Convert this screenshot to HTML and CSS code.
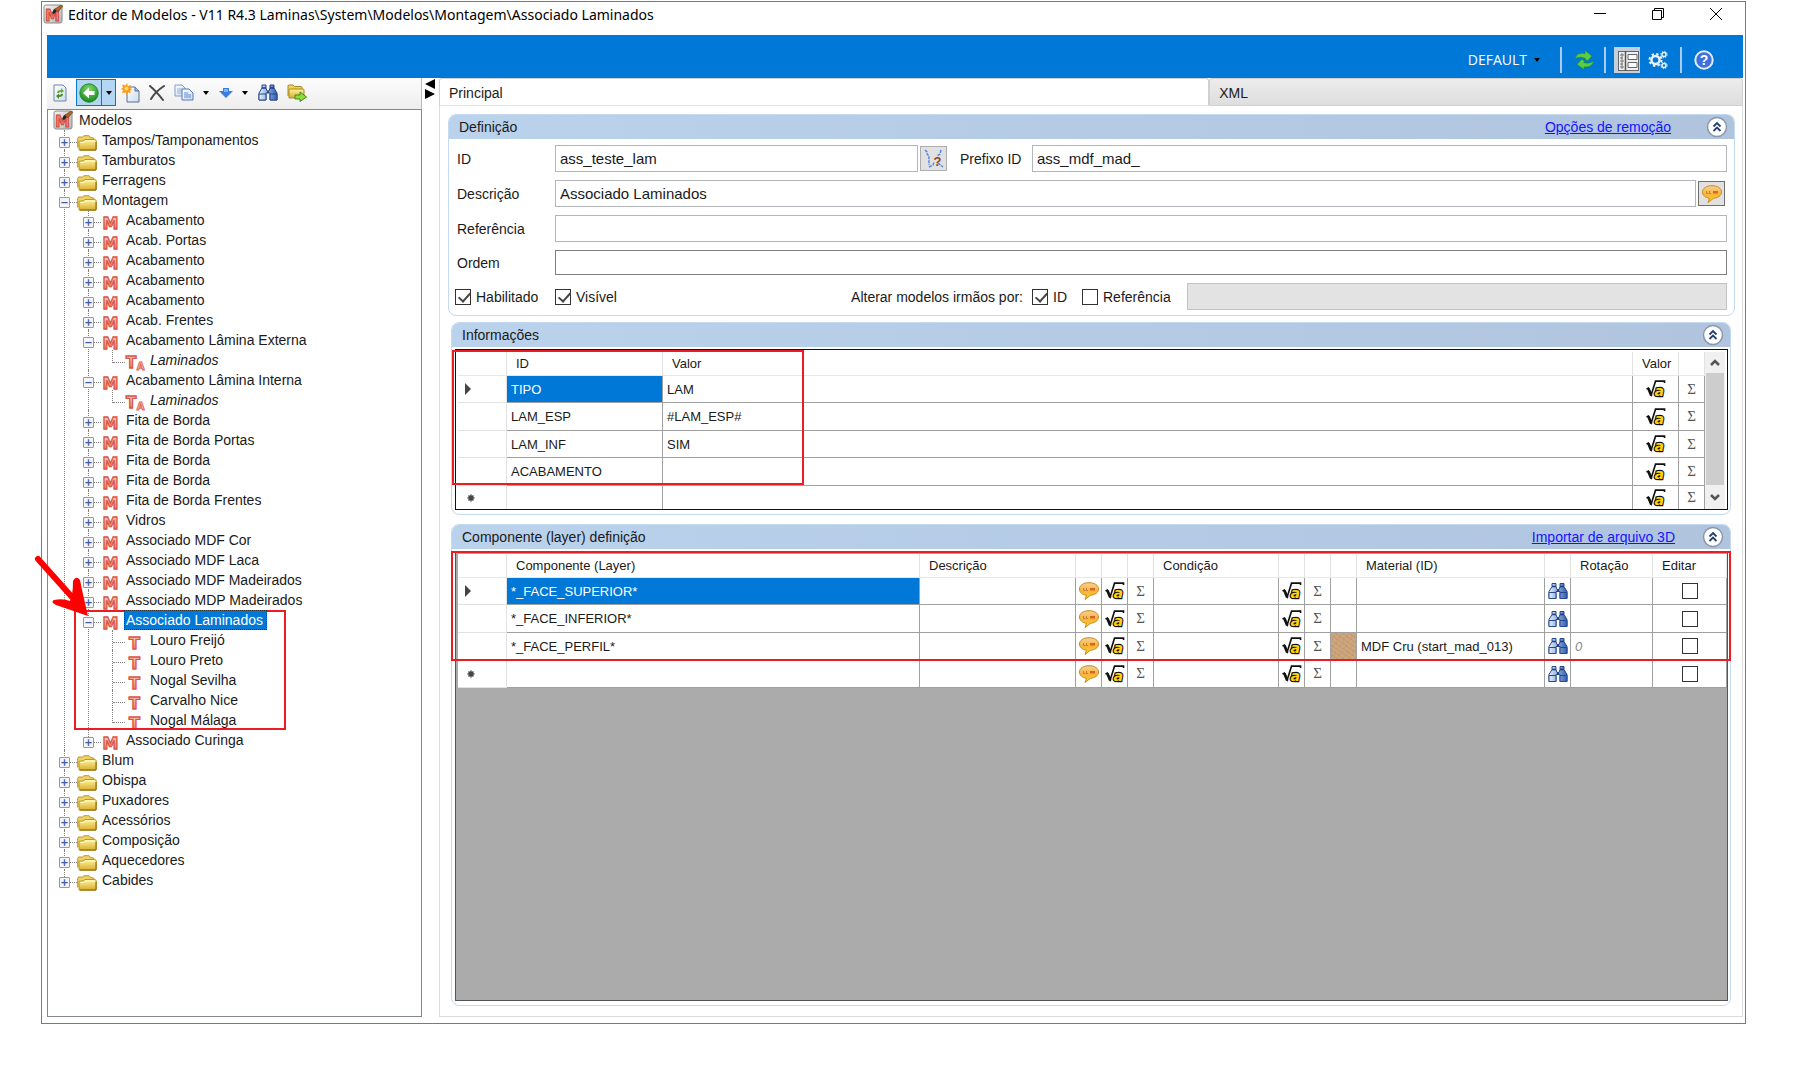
FILE: index.html
```html
<!DOCTYPE html>
<html lang="pt-BR">
<head>
    <meta charset="UTF-8">
    <title>Editor de Modelos</title>
    <link rel="stylesheet" href="styles.css">
</head>
<body>
    <!-- icon sprite: gradients and plain shapes -->
    <svg class="sprite" aria-hidden="true">
        <defs>
            <linearGradient id="gRed" x1="0" y1="0" x2="0" y2="1"><stop offset="0" stop-color="#fbe3c8"/><stop offset="1" stop-color="#f4604a"/></linearGradient>
            <linearGradient id="gGold" x1="0" y1="0" x2="0" y2="1"><stop offset="0" stop-color="#fff3a0"/><stop offset="1" stop-color="#d9ac2c"/></linearGradient>
            <linearGradient id="gBlue" x1="0" y1="0" x2="1" y2="0"><stop offset="0" stop-color="#e6f1fc"/><stop offset="1" stop-color="#2f5fb0"/></linearGradient>
            <linearGradient id="gPage" x1="0" y1="0" x2="1" y2="1"><stop offset="0" stop-color="#ffffff"/><stop offset="1" stop-color="#c9dcf2"/></linearGradient>
            <radialGradient id="gGreen" cx=".5" cy=".3" r=".7"><stop offset="0" stop-color="#7fdc6c"/><stop offset="1" stop-color="#16881c"/></radialGradient>
            <linearGradient id="gBalloon" x1="0" y1="0" x2="0" y2="1"><stop offset="0" stop-color="#f7cf98"/><stop offset=".5" stop-color="#f7b53c"/><stop offset="1" stop-color="#ffd21c"/></linearGradient>
            <linearGradient id="gGray" x1="0" y1="0" x2="1" y2="1"><stop offset="0" stop-color="#f6f6f6"/><stop offset="1" stop-color="#b5b5b5"/></linearGradient>
        </defs>
        <symbol id="i-folder" viewBox="0 0 20 16">
            <path d="M.7 12.500V3.500Q.7 2 2 2h3.500L7 .7h5l1.300 1.600 3.700 1v4" fill="#f0d060" stroke="#b8992c"/>
            <path d="M2 15V7q0-1 1-1h3l2-1.500h9.500q1.800 0 1.800 1.500v8q0 1.200-1.200 1.200H3Q2 15.200 2 15z" fill="url(#gGold)" stroke="#b8992c"/>
            <path d="M3.500 7.500h3.500l1.500-1.500h9" fill="none" stroke="#fffbd5"/>
            <path d="M19 7v8H3" fill="none" stroke="#8a6c10"/>
        </symbol>
        <symbol id="i-page-refresh" viewBox="0 0 14 18">
            <path d="M1 1h9l3 3v13H1z" fill="url(#gPage)" stroke="#6f87a5"/>
            <path d="M4 9q0-3 4-3V4l3 3-3 2.500V8Q6 8 6 9z" fill="#6fae3c"/>
            <path d="M10 10q0 3-4 3v2l-3-3 3-2.500V11q2 0 2-1z" fill="#4c8c28"/>
        </symbol>
        <symbol id="i-back" viewBox="0 0 20 20">
            <circle cx="10" cy="10" r="9.200" fill="url(#gGreen)" stroke="#2a8a2a"/>
            <path d="M4 10l6-5.500v3.500h5.500v4H10v3.500z" fill="#fff"/>
        </symbol>
        <symbol id="i-new" viewBox="0 0 19 20">
            <path d="M6 4h8l4 4v11H6z" fill="url(#gPage)" stroke="#5a6f8e"/><path d="M14 4v4h4" fill="#9db7d8" stroke="#5a6f8e"/>
            <path d="M6 0l1 3 3-1-1 3 2 1-2 2 1 2-3-.500-1 2.500-1.500-2.500L1 10l1-3L0 6l2-1.500L1 1.500l3.500 1z" fill="#ff9c1e"/><circle cx="5.500" cy="5.500" r="2" fill="#ffe066"/>
        </symbol>
        <symbol id="i-x" viewBox="0 0 16 16">
            <path d="M1 1q6 5 13 14M15 1Q6 7 2 14" fill="none" stroke="#484848" stroke-width="2" stroke-linecap="round"/>
        </symbol>
        <symbol id="i-copy" viewBox="0 0 20 17">
            <path d="M1 1h7l3 3v8H1z" fill="url(#gPage)" stroke="#7f9cc8"/><path d="M3 5h5M3 7h5M3 9h5" stroke="#8fb0de"/>
            <path d="M8 5h7l4 4v7H8z" fill="url(#gPage)" stroke="#5878b8"/><path d="M10 9h4M10 11h7M10 13h7" stroke="#5a8ad8"/>
        </symbol>
        <symbol id="i-down" viewBox="0 0 14 10">
            <path d="M4 0h6v3h4L7 10 0 3h4z" fill="#3a7fe0"/><path d="M5 1h4v3H5z" fill="#7fb2f5"/>
        </symbol>
        <symbol id="i-bin" viewBox="0 0 20 17">
            <path d="M4 4V1h4v3l1 3h2l1-3V1h4v3l3 5v7h-7V9H8v7H1V9z" fill="url(#gBlue)" stroke="#26488f"/>
            <path d="M1 10h7v6H1zM12 10h7v6h-7z" fill="url(#gBlue)" stroke="#26488f"/>
            <path d="M4 4h4M12 4h4M9 8h2" stroke="#1f3c80" stroke-width="1.500"/>
        </symbol>
        <symbol id="i-folder-go" viewBox="0 0 20 18">
            <path d="M1 12V2q0-1 1-1h4l1.500 1.500H14Q15 2.500 15 4v2" fill="#f0d060" stroke="#a98a1c"/>
            <path d="M2 14V6q0-1 1-1h13q1 0 1 1v8z" fill="url(#gGold)" stroke="#a98a1c"/>
            <path d="M8 11h5V8l6.500 5L13 17.500V15H8z" fill="#8edb3c" stroke="#3d8a1c"/>
        </symbol>
        <symbol id="i-sync" viewBox="0 0 20 20">
            <path d="M1 8.500Q3 2 11 3.500V.5L18 6l-4.500 5L10 8.500h1.500Q6 6 1 8.500z" fill="#5ccc44" stroke="#1d8a2a" stroke-width=".6"/>
            <path d="M20 11q-2 6.500-10 6v2.500L3 14.500 8 9l3 3-1.500.500q5 2 10.500-1.500z" fill="#5ccc44" stroke="#1d8a2a" stroke-width=".6"/>
        </symbol>
        <symbol id="i-form" viewBox="0 0 26 26">
            <rect width="26" height="26" fill="#c4cfdb"/>
            <rect x="4.500" y="4.500" width="20" height="19" fill="#eee" stroke="#666"/>
            <path d="M11.500 4v20" stroke="#555" stroke-width="1.500"/>
            <path d="M6 8h4M6 11h3M6 14h4M6 17h3M6 20h4M8 6v16" stroke="#777"/>
            <path d="M14 7.500h9v5h-9zM14 15.500h9v5h-9z" fill="#fafafa" stroke="#666"/>
        </symbol>
        <symbol id="i-gears" viewBox="0 0 20 20">
            <circle cx="7.500" cy="10" r="4" fill="none" stroke="#e9f2fb" stroke-width="2.400"/>
            <circle cx="7.500" cy="10" r="6" fill="none" stroke="#e9f2fb" stroke-width="2" stroke-dasharray="2.400 2.310"/>
            <circle cx="16" cy="4.500" r="2" fill="none" stroke="#e9f2fb" stroke-width="1.500"/>
            <circle cx="16" cy="4.500" r="3.200" fill="none" stroke="#e9f2fb" stroke-width="1" stroke-dasharray="1.200 1.300"/>
            <circle cx="16" cy="15.500" r="2" fill="none" stroke="#e9f2fb" stroke-width="1.500"/>
            <circle cx="16" cy="15.500" r="3.200" fill="none" stroke="#e9f2fb" stroke-width="1" stroke-dasharray="1.200 1.300"/>
        </symbol>
        <symbol id="i-balloon" viewBox="0 0 20 18">
            <path d="M10 .7c5.500 0 9.500 2.500 9.500 6.300S15.500 13 11.500 13.300L6 17.500l1.500-4.200C3.500 12.700.5 10.500.5 7 .5 3.200 4.500.7 10 .7z" fill="url(#gBalloon)" stroke="#c98a1c"/>
            <path d="M4.500 6v2.500h2M7.500 6v2.500h1.500" fill="none" stroke="#c77a3a"/><path d="M11 6h5v2.500h-5z" fill="#d9661c"/>
        </symbol>
        <symbol id="i-up2" viewBox="0 0 22 22">
            <circle cx="11" cy="11" r="9.500" fill="#fff" stroke="#8b97aa" stroke-width="1.500"/>
            <path d="M7.500 10.500L11 7l3.500 3.500M7.500 15l3.500-3.500 3.500 3.500" fill="none" stroke="#24406e" stroke-width="1.800"/>
        </symbol>
        <symbol id="i-row" viewBox="0 0 6 12"><path d="M0 0l6 6-6 6z" fill="#444"/></symbol>
        <symbol id="i-star" viewBox="0 0 8 8"><path d="M4 .5v7M.5 4h7M1.500 1.500l5 5M6.500 1.500l-5 5" stroke="#444" stroke-width="1.500"/></symbol>
    </svg>

    <!-- icon sprite: lettered icons -->
    <svg class="letters" aria-hidden="true">
        <symbol id="i-app" viewBox="0 0 20 20">
            <rect x="1" y="1" width="18" height="18" rx="2" fill="url(#gGray)" stroke="#8a8a8a"/>
            <text x="9.500" y="17" text-anchor="middle" font-family="DejaVu Sans" font-weight="bold" font-size="15" fill="#ef7f72" stroke="#d0493c" stroke-width="1">M</text>
            <path d="M9 9l2-4 3 2-3 3z" fill="#222"/><path d="M12 5l6-4 2 1-5 6z" fill="#a8642c" stroke="#6e3d14" stroke-width=".6"/>
        </symbol>
        <symbol id="i-m" viewBox="0 0 20 16">
            <text x="9.500" y="13.500" text-anchor="middle" font-family="DejaVu Sans" font-weight="bold" font-size="16" fill="url(#gRed)" stroke="#d8564a" stroke-width="1.300">M</text>
        </symbol>
        <symbol id="i-t" viewBox="0 0 20 16">
            <text x="9.500" y="14" text-anchor="middle" font-family="DejaVu Sans" font-weight="bold" font-size="16" fill="url(#gRed)" stroke="#d8564a" stroke-width="1.300">T</text>
        </symbol>
        <symbol id="i-ta" viewBox="0 0 20 16">
            <text x="6" y="13" text-anchor="middle" font-family="DejaVu Sans" font-weight="bold" font-size="15" fill="url(#gRed)" stroke="#d8564a" stroke-width="1.300">T</text>
            <text x="15.500" y="15" text-anchor="middle" font-family="DejaVu Sans" font-weight="bold" font-size="10" fill="#fbd9cc" stroke="#e0685c" stroke-width="1">A</text>
        </symbol>
        <symbol id="i-help" viewBox="0 0 20 20">
            <circle cx="10" cy="10" r="8.700" fill="#3f6fd8" stroke="#e4ecf8" stroke-width="2"/>
            <text x="10" y="15" text-anchor="middle" font-family="Liberation Sans" font-weight="bold" font-size="14" fill="#fff">?</text>
        </symbol>
        <symbol id="i-sqrt" viewBox="0 0 20 19">
            <path d="M0 9.500l2-1 3 7L9.500 1.200H19v2" fill="none" stroke="#111" stroke-width="1.700"/>
            <path d="M2 9l3 7.500" stroke="#111" stroke-width="2.800"/>
            <text x="8.500" y="17" font-family="DejaVu Sans" font-weight="bold" font-style="italic" font-size="15" fill="#ffcf10" stroke="#111" stroke-width="2.400" paint-order="stroke">a</text>
        </symbol>
        <symbol id="i-vars" viewBox="0 0 20 20">
            <path d="M1 1l2 2v2l2 2v9M17 1l-1 4-3 2M5 18l4-2 1-3M14 14l5 4" fill="none" stroke="#4f7fe0" stroke-width="1.400" stroke-dasharray="3 1"/>
            <text x="13.500" y="17" text-anchor="middle" font-family="Liberation Sans" font-weight="bold" font-size="13" fill="#8a4a1c">?</text>
        </symbol>
    </svg>

    <div class="window">
        <header class="titlebar">
            <svg class="app-icon"><use href="#i-app"/></svg>
            <h1 class="title">Editor de Modelos - V11 R4.3 Laminas\System\Modelos\Montagem\Associado Laminados</h1>
            <button class="win-btn" aria-label="Minimizar"><svg viewBox="0 0 14 14"><path d="M1 6.500h12" stroke="#000" fill="none"/></svg></button>
            <button class="win-btn" aria-label="Restaurar"><svg viewBox="0 0 14 14"><path d="M1.500 3.500h9v9h-9zM3.500 3.500v-2h9v9h-2" stroke="#000" fill="none"/></svg></button>
            <button class="win-btn" aria-label="Fechar"><svg viewBox="0 0 14 14"><path d="M1 1l12 12M13 1L1 13" stroke="#000" fill="none"/></svg></button>
        </header>

        <div class="topbar">
            <button class="profile">DEFAULT <span class="caret"></span></button>
            <span class="sep"></span>
            <button class="top-btn" aria-label="Sincronizar"><svg class="s20"><use href="#i-sync"/></svg></button>
            <span class="sep"></span>
            <button class="top-btn wide" aria-label="Formulário"><svg class="s26"><use href="#i-form"/></svg></button>
            <button class="top-btn" aria-label="Configurações"><svg class="s20"><use href="#i-gears"/></svg></button>
            <span class="sep"></span>
            <button class="top-btn last" aria-label="Ajuda"><svg class="s20"><use href="#i-help"/></svg></button>
        </div>

        <div class="main">
            <aside class="left">
                <div class="toolbar">
                    <button class="tool" aria-label="Atualizar"><svg width="14" height="18"><use href="#i-page-refresh"/></svg></button>
                    <span class="split">
                        <button class="tool" aria-label="Voltar"><svg class="s20"><use href="#i-back"/></svg></button>
                        <button class="drop" aria-label="Histórico"><span class="caret"></span></button>
                    </span>
                    <button class="tool" aria-label="Novo"><svg width="19" height="20"><use href="#i-new"/></svg></button>
                    <button class="tool" aria-label="Excluir"><svg width="16" height="16"><use href="#i-x"/></svg></button>
                    <button class="tool" aria-label="Copiar"><svg width="20" height="17"><use href="#i-copy"/></svg></button>
                    <button class="drop" aria-label="Opções de cópia"><span class="caret"></span></button>
                    <button class="tool" aria-label="Descer"><svg width="14" height="10"><use href="#i-down"/></svg></button>
                    <button class="drop" aria-label="Opções de ordem"><span class="caret"></span></button>
                    <button class="tool" aria-label="Localizar"><svg width="20" height="17"><use href="#i-bin"/></svg></button>
                    <button class="tool" aria-label="Ir para pasta"><svg width="20" height="18"><use href="#i-folder-go"/></svg></button>
                </div>

                <div class="tree">
                    <div class="root"><svg class="s20"><use href="#i-app"/></svg><span>Modelos</span></div>
                    <ul>
                        <li><div class="node"><button class="exp">+</button><svg><use href="#i-folder"/></svg><span>Tampos/Tamponamentos</span></div></li>
                        <li><div class="node"><button class="exp">+</button><svg><use href="#i-folder"/></svg><span>Tamburatos</span></div></li>
                        <li><div class="node"><button class="exp">+</button><svg><use href="#i-folder"/></svg><span>Ferragens</span></div></li>
                        <li><div class="node"><button class="exp">−</button><svg><use href="#i-folder"/></svg><span>Montagem</span></div>
                            <ul>
                                <li><div class="node"><button class="exp">+</button><svg><use href="#i-m"/></svg><span>Acabamento</span></div></li>
                                <li><div class="node"><button class="exp">+</button><svg><use href="#i-m"/></svg><span>Acab. Portas</span></div></li>
                                <li><div class="node"><button class="exp">+</button><svg><use href="#i-m"/></svg><span>Acabamento</span></div></li>
                                <li><div class="node"><button class="exp">+</button><svg><use href="#i-m"/></svg><span>Acabamento</span></div></li>
                                <li><div class="node"><button class="exp">+</button><svg><use href="#i-m"/></svg><span>Acabamento</span></div></li>
                                <li><div class="node"><button class="exp">+</button><svg><use href="#i-m"/></svg><span>Acab. Frentes</span></div></li>
                                <li><div class="node"><button class="exp">−</button><svg><use href="#i-m"/></svg><span>Acabamento Lâmina Externa</span></div>
                                    <ul>
                                        <li><div class="node leaf"><svg><use href="#i-ta"/></svg><em>Laminados</em></div></li>
                                    </ul>
                                </li>
                                <li><div class="node"><button class="exp">−</button><svg><use href="#i-m"/></svg><span>Acabamento Lâmina Interna</span></div>
                                    <ul>
                                        <li><div class="node leaf"><svg><use href="#i-ta"/></svg><em>Laminados</em></div></li>
                                    </ul>
                                </li>
                                <li><div class="node"><button class="exp">+</button><svg><use href="#i-m"/></svg><span>Fita de Borda</span></div></li>
                                <li><div class="node"><button class="exp">+</button><svg><use href="#i-m"/></svg><span>Fita de Borda Portas</span></div></li>
                                <li><div class="node"><button class="exp">+</button><svg><use href="#i-m"/></svg><span>Fita de Borda</span></div></li>
                                <li><div class="node"><button class="exp">+</button><svg><use href="#i-m"/></svg><span>Fita de Borda</span></div></li>
                                <li><div class="node"><button class="exp">+</button><svg><use href="#i-m"/></svg><span>Fita de Borda Frentes</span></div></li>
                                <li><div class="node"><button class="exp">+</button><svg><use href="#i-m"/></svg><span>Vidros</span></div></li>
                                <li><div class="node"><button class="exp">+</button><svg><use href="#i-m"/></svg><span>Associado MDF Cor</span></div></li>
                                <li><div class="node"><button class="exp">+</button><svg><use href="#i-m"/></svg><span>Associado MDF Laca</span></div></li>
                                <li><div class="node"><button class="exp">+</button><svg><use href="#i-m"/></svg><span>Associado MDF Madeirados</span></div></li>
                                <li><div class="node"><button class="exp">+</button><svg><use href="#i-m"/></svg><span>Associado MDP Madeirados</span></div></li>
                                <li><div class="node"><button class="exp">−</button><svg><use href="#i-m"/></svg><span class="selected">Associado Laminados</span></div>
                                    <ul>
                                        <li><div class="node leaf"><svg><use href="#i-t"/></svg><span>Louro Freijó</span></div></li>
                                        <li><div class="node leaf"><svg><use href="#i-t"/></svg><span>Louro Preto</span></div></li>
                                        <li><div class="node leaf"><svg><use href="#i-t"/></svg><span>Nogal Sevilha</span></div></li>
                                        <li><div class="node leaf"><svg><use href="#i-t"/></svg><span>Carvalho Nice</span></div></li>
                                        <li><div class="node leaf"><svg><use href="#i-t"/></svg><span>Nogal Málaga</span></div></li>
                                    </ul>
                                    <div class="mark mark-tree"></div>
                                    <svg class="arrow" viewBox="0 0 54 62"><path d="M4 4L38 42" stroke="#f00" stroke-width="6" stroke-linecap="round"/><path d="M54 61L22 50Q16 47 20 45Q29 43 36 46Q39 40 39 26Q42 20 46 25Q49 40 54 61z" fill="#f00"/></svg>
                                </li>
                                <li><div class="node"><button class="exp">+</button><svg><use href="#i-m"/></svg><span>Associado Curinga</span></div></li>
                            </ul>
                        </li>
                        <li><div class="node"><button class="exp">+</button><svg><use href="#i-folder"/></svg><span>Blum</span></div></li>
                        <li><div class="node"><button class="exp">+</button><svg><use href="#i-folder"/></svg><span>Obispa</span></div></li>
                        <li><div class="node"><button class="exp">+</button><svg><use href="#i-folder"/></svg><span>Puxadores</span></div></li>
                        <li><div class="node"><button class="exp">+</button><svg><use href="#i-folder"/></svg><span>Acessórios</span></div></li>
                        <li><div class="node"><button class="exp">+</button><svg><use href="#i-folder"/></svg><span>Composição</span></div></li>
                        <li><div class="node"><button class="exp">+</button><svg><use href="#i-folder"/></svg><span>Aquecedores</span></div></li>
                        <li><div class="node"><button class="exp">+</button><svg><use href="#i-folder"/></svg><span>Cabides</span></div></li>
                    </ul>
                </div>
            </aside>

            <div class="splitter">
                <svg width="10" height="20" viewBox="0 0 10 20"><path d="M10 0v10L0 5zM0 10v10l10-5z"/></svg>
            </div>

            <main class="right">
                <div class="tabs">
                    <button class="tab active">Principal</button>
                    <button class="tab">XML</button>
                </div>
                <div class="page">
                    <section class="group wide-group">
                        <div class="group-head">
                            <h2>Definição</h2>
                            <a href="#">Opções de remoção</a>
                            <button class="collapse" aria-label="Recolher"><svg><use href="#i-up2"/></svg></button>
                        </div>
                        <div class="form">
                            <div class="row cols">
                                <label for="id">ID</label>
                                <div class="cell">
                                    <input type="text" id="id" value="ass_teste_lam">
                                    <button class="side-btn" aria-label="Variáveis"><svg class="s20"><use href="#i-vars"/></svg></button>
                                    <label class="prefix" for="prefixo">Prefixo ID</label>
                                </div>
                                <input type="text" id="prefixo" value="ass_mdf_mad_">
                            </div>
                            <div class="row">
                                <label for="descricao">Descrição</label>
                                <input type="text" id="descricao" value="Associado Laminados">
                                <button class="side-btn dark" aria-label="Traduzir"><svg width="20" height="18"><use href="#i-balloon"/></svg></button>
                            </div>
                            <div class="row">
                                <label for="referencia">Referência</label>
                                <input type="text" id="referencia">
                            </div>
                            <div class="row">
                                <label for="ordem">Ordem</label>
                                <input type="text" id="ordem" class="short">
                            </div>
                            <div class="row cols">
                                <label class="check"><input type="checkbox" checked>Habilitado</label>
                                <div class="cell">
                                    <label class="check"><input type="checkbox" checked>Visível</label>
                                    <span class="hint">Alterar modelos irmãos por:</span>
                                </div>
                                <div class="cell">
                                    <label class="check"><input type="checkbox" checked>ID</label>
                                    <label class="check ref"><input type="checkbox">Referência</label>
                                    <input type="text" aria-label="Referência" disabled>
                                </div>
                            </div>
                        </div>
                    </section>

                    <section class="group">
                        <div class="group-head">
                            <h2>Informações</h2>
                            <button class="collapse" aria-label="Recolher"><svg><use href="#i-up2"/></svg></button>
                        </div>
                        <div class="grid info-grid">
                            <table>
                                <colgroup><col class="w-head"><col class="w-id"><col><col class="w-val"><col class="w-ico"></colgroup>
                                <thead>
                                    <tr><th></th><th>ID</th><th>Valor</th><th class="mid">Valor</th><th></th></tr>
                                </thead>
                                <tbody>
                                    <tr><td class="rh"><svg class="cur"><use href="#i-row"/></svg></td><td class="sel">TIPO</td><td>LAM</td><td class="ico"><button aria-label="Fórmula"><svg><use href="#i-sqrt"/></svg></button></td><td class="ico sum">Σ</td></tr>
                                    <tr><td class="rh"></td><td>LAM_ESP</td><td>#LAM_ESP#</td><td class="ico"><button aria-label="Fórmula"><svg><use href="#i-sqrt"/></svg></button></td><td class="ico sum">Σ</td></tr>
                                    <tr><td class="rh"></td><td>LAM_INF</td><td>SIM</td><td class="ico"><button aria-label="Fórmula"><svg><use href="#i-sqrt"/></svg></button></td><td class="ico sum">Σ</td></tr>
                                    <tr><td class="rh"></td><td>ACABAMENTO</td><td></td><td class="ico"><button aria-label="Fórmula"><svg><use href="#i-sqrt"/></svg></button></td><td class="ico sum">Σ</td></tr>
                                    <tr><td class="rh"><svg class="star"><use href="#i-star"/></svg></td><td></td><td></td><td class="ico"><button aria-label="Fórmula"><svg><use href="#i-sqrt"/></svg></button></td><td class="ico sum">Σ</td></tr>
                                </tbody>
                            </table>
                            <div class="scroll">
                                <button aria-label="Rolar para cima"><svg viewBox="0 0 10 8"><path d="M1 6l4-4 4 4" fill="none" stroke="#555" stroke-width="2.500"/></svg></button>
                                <div class="thumb"></div>
                                <button aria-label="Rolar para baixo"><svg viewBox="0 0 10 8"><path d="M1 2l4 4 4-4" fill="none" stroke="#555" stroke-width="2.500"/></svg></button>
                            </div>
                            <div class="mark mark-info"></div>
                        </div>
                    </section>

                    <section class="group last-group">
                        <div class="group-head">
                            <h2>Componente (layer) definição</h2>
                            <a href="#">Importar de arquivo 3D</a>
                            <button class="collapse" aria-label="Recolher"><svg><use href="#i-up2"/></svg></button>
                        </div>
                        <div class="grid comp-grid">
                            <table>
                                <colgroup><col class="w-head"><col><col class="w-desc"><col class="w-ico"><col class="w-ico"><col class="w-ico"><col class="w-cond"><col class="w-ico"><col class="w-ico"><col class="w-ico"><col class="w-mat"><col class="w-ico"><col class="w-rot"><col class="w-edit"></colgroup>
                                <thead>
                                    <tr><th></th><th>Componente (Layer)</th><th>Descrição</th><th></th><th></th><th></th><th>Condição</th><th></th><th></th><th></th><th>Material (ID)</th><th></th><th>Rotação</th><th>Editar</th></tr>
                                </thead>
                                <tbody>
                                    <tr><td class="rh"><svg class="cur"><use href="#i-row"/></svg></td><td class="sel">*_FACE_SUPERIOR*</td><td></td><td class="ico"><button aria-label="Traduzir"><svg><use href="#i-balloon"/></svg></button></td><td class="ico"><button aria-label="Fórmula"><svg><use href="#i-sqrt"/></svg></button></td><td class="ico sum">Σ</td><td></td><td class="ico"><button aria-label="Fórmula"><svg><use href="#i-sqrt"/></svg></button></td><td class="ico sum">Σ</td><td></td><td></td><td class="ico"><button aria-label="Localizar"><svg><use href="#i-bin"/></svg></button></td><td></td><td class="ico"><input type="checkbox" aria-label="Editar"></td></tr>
                                    <tr><td class="rh"></td><td>*_FACE_INFERIOR*</td><td></td><td class="ico"><button aria-label="Traduzir"><svg><use href="#i-balloon"/></svg></button></td><td class="ico"><button aria-label="Fórmula"><svg><use href="#i-sqrt"/></svg></button></td><td class="ico sum">Σ</td><td></td><td class="ico"><button aria-label="Fórmula"><svg><use href="#i-sqrt"/></svg></button></td><td class="ico sum">Σ</td><td></td><td></td><td class="ico"><button aria-label="Localizar"><svg><use href="#i-bin"/></svg></button></td><td></td><td class="ico"><input type="checkbox" aria-label="Editar"></td></tr>
                                    <tr><td class="rh"></td><td>*_FACE_PERFIL*</td><td></td><td class="ico"><button aria-label="Traduzir"><svg><use href="#i-balloon"/></svg></button></td><td class="ico"><button aria-label="Fórmula"><svg><use href="#i-sqrt"/></svg></button></td><td class="ico sum">Σ</td><td></td><td class="ico"><button aria-label="Fórmula"><svg><use href="#i-sqrt"/></svg></button></td><td class="ico sum">Σ</td><td class="mdf"></td><td>MDF Cru (start_mad_013)</td><td class="ico"><button aria-label="Localizar"><svg><use href="#i-bin"/></svg></button></td><td class="rot">0</td><td class="ico"><input type="checkbox" aria-label="Editar"></td></tr>
                                    <tr><td class="rh"><svg class="star"><use href="#i-star"/></svg></td><td></td><td></td><td class="ico"><button aria-label="Traduzir"><svg><use href="#i-balloon"/></svg></button></td><td class="ico"><button aria-label="Fórmula"><svg><use href="#i-sqrt"/></svg></button></td><td class="ico sum">Σ</td><td></td><td class="ico"><button aria-label="Fórmula"><svg><use href="#i-sqrt"/></svg></button></td><td class="ico sum">Σ</td><td></td><td></td><td class="ico"><button aria-label="Localizar"><svg><use href="#i-bin"/></svg></button></td><td></td><td class="ico"><input type="checkbox" aria-label="Editar"></td></tr>
                                </tbody>
                            </table>
                            <div class="mark mark-comp"></div>
                        </div>
                    </section>
                </div>
            </main>
        </div>
    </div>
</body>
</html>
```

FILE: styles.css
```css
* {
    box-sizing: border-box;
}
body {
    margin: 0;
    padding: 1px 50px 44px 41px;
    min-height: 100vh;
    display: flex;
    flex-direction: column;
    font-family: "Liberation Sans", Arial, sans-serif;
    font-size: 14px;
    color: #1a1a1a;
    background-color: #fff;
}
button {
    font: inherit;
    color: inherit;
    background: none;
    border: none;
    padding: 0;
}
svg {
    display: block;
    flex: none;
}
.sprite {
    position: absolute;
    width: 0;
    height: 0;
}
.letters {
    display: none;
}
.s20 {
    width: 20px;
    height: 20px;
}
.s26 {
    width: 26px;
    height: 26px;
}
.caret {
    display: block;
    border: 3px solid transparent;
    border-top: 4px solid #000;
    border-bottom: none;
}

/* window frame */
.window {
    flex: 1;
    display: flex;
    flex-direction: column;
    border: 1px solid #7a7a7a;
}
.titlebar {
    height: 33px;
    display: flex;
    align-items: flex-start;
    padding-left: 1px;
}
.app-icon {
    width: 20px;
    height: 20px;
    margin-top: 2px;
}
.title {
    flex: 1;
    margin: 0 0 0 5px;
    font-family: "Noto Sans", "Open Sans", sans-serif;
    font-size: 14px;
    font-weight: normal;
    line-height: 26px;
    color: #000;
}
.win-btn {
    width: 58px;
    height: 24px;
    display: flex;
    align-items: center;
    justify-content: center;
}
.win-btn svg {
    width: 14px;
    height: 14px;
}
.topbar {
    height: 43px;
    margin: 0 2px 0 5px;
    padding: 6px 23px 0 0;
    background-color: #0078d7;
    display: flex;
    align-items: center;
    justify-content: flex-end;
}
.profile {
    display: flex;
    align-items: center;
    gap: 7px;
    margin-right: 20px;
    font-family: "Open Sans", "Noto Sans", sans-serif;
    color: #fff;
}
.sep {
    width: 2px;
    height: 26px;
    background-color: #a9cdee;
}
.top-btn {
    margin: 0 10px 0 12px;
}
.top-btn.wide {
    margin: 0 8px 0 8px;
}
.top-btn.wide + .top-btn {
    margin: 0 12px 0 0;
}
.top-btn.last {
    margin: 0 6px 0 12px;
}
.main {
    flex: 1;
    display: flex;
    margin: 0 2px 6px 5px;
}

/* left pane */
.left {
    width: 375px;
    display: flex;
    flex-direction: column;
}
.toolbar {
    height: 31px;
    display: flex;
    align-items: center;
    padding: 0 0 2px 6px;
    background: linear-gradient(#fcfcfc, #eee);
    border-right: 1px solid #bbb;
}
.toolbar > .tool {
    margin-right: 9px;
}
.toolbar > .drop {
    margin-left: -3px;
    margin-right: 7px;
}
.drop {
    width: 12px;
    display: flex;
    justify-content: center;
}
.split {
    display: flex;
    align-items: stretch;
    height: 27px;
    margin-right: 5px;
    background-color: #b3d7f3;
    border: 1px solid #0078d7;
}
.split .tool {
    width: 25px;
    display: flex;
    align-items: center;
    justify-content: center;
    border-right: 1px solid #0078d7;
}
.split .drop {
    width: 13px;
    align-items: center;
}
.tree {
    flex: 1;
    border: 1px solid #828790;
    padding: 0 1px;
}
.root {
    height: 20px;
    display: flex;
    align-items: center;
    gap: 6px;
    padding: 0 0 0 4px;
}
.tree ul {
    list-style: none;
    margin: 0;
    padding: 0;
}
.tree ul ul {
    padding-left: 24px;
}
.tree li {
    position: relative;
}
.tree li::before {
    content: "";
    position: absolute;
    left: 15px;
    top: 0;
    bottom: 0;
    border-left: 1px dotted #808080;
}
.tree li:last-child::before {
    bottom: auto;
    height: 13px;
}
.node {
    height: 20px;
    line-height: 20px;
    display: flex;
    padding-left: 10px;
    white-space: nowrap;
}
.node::before {
    content: "";
    position: absolute;
    left: 16px;
    top: 12px;
    width: 12px;
    border-top: 1px dotted #808080;
}
.leaf {
    padding-left: 28px;
}
.exp {
    position: relative;
    width: 11px;
    height: 11px;
    margin: 7px 7px 0 0;
    font-family: "DejaVu Sans", sans-serif;
    font-size: 10px;
    font-weight: bold;
    line-height: 9px;
    color: #3c5aa8;
    background-color: #f4f4f4;
    border: 1px solid #999;
    border-radius: 1px;
}
.node svg {
    width: 20px;
    height: 16px;
    margin-top: 5px;
}
.node span,
.node em {
    margin-left: 3px;
    padding: 0 4px 0 2px;
    height: 20px;
}
.node .selected {
    color: #fff;
    background-color: #0078d7;
    outline: 1px dotted #333;
    outline-offset: -1px;
}

/* red annotations, drawn over the content */
.mark {
    position: absolute;
    border: 2px solid #ed1c24;
    pointer-events: none;
}
.mark-tree {
    left: 1px;
    top: 0;
    width: 212px;
    height: 120px;
}
.node .selected {
    position: relative;
    z-index: 1;
}
.arrow {
    position: absolute;
    left: -39px;
    top: -55px;
    width: 54px;
    height: 62px;
}
.mark-info {
    left: -4px;
    top: 0;
    width: 352px;
    height: 135px;
}
.mark-comp {
    left: -5px;
    right: -4px;
    top: -1px;
    height: 110px;
}

.splitter {
    width: 17px;
    padding: 1px 0 0 3px;
}

/* right pane */
.right {
    flex: 1;
    min-width: 0;
    display: flex;
    flex-direction: column;
}
.tabs {
    display: flex;
    height: 28px;
}
.tab {
    flex: 530;
    padding: 2px 9px 0;
    text-align: left;
    background: linear-gradient(#ececec, #dedede);
    border: 1px solid #d0d0d0;
    border-radius: 3px 3px 0 0;
}
.tab.active {
    flex: 774;
    background: #fff;
    border-bottom-color: #e4e4e4;
}
.page {
    flex: 1;
    display: flex;
    flex-direction: column;
    padding: 8px 7px 10px 8px;
    border: 1px solid #dcdcdc;
    border-top: none;
}
.group {
    margin: 0 4px 9px 3px;
    border: 1px solid #c3daf2;
    border-radius: 8px;
}
.wide-group {
    margin: 0 0 6px;
}
.last-group {
    flex: 1;
    display: flex;
    flex-direction: column;
    margin-bottom: 0;
}
.group-head {
    height: 24px;
    display: flex;
    align-items: center;
    padding: 0 6px 0 10px;
    background: linear-gradient(90deg, #bad2ec, #b0c4de);
    border-radius: 7px 7px 0 0;
}
.group-head h2 {
    margin: 0;
    flex: 1;
    font-size: 14px;
    font-weight: normal;
}
.group-head a {
    margin-right: 35px;
    color: #1414ff;
}
.last-group .group-head a {
    margin-right: 27px;
}
.collapse svg {
    width: 22px;
    height: 22px;
}
.form {
    padding: 6px 7px 5px 8px;
    display: flex;
    flex-direction: column;
    gap: 8px;
}
.row {
    display: flex;
    align-items: center;
}
.row > label {
    width: 98px;
    flex: none;
}
.row.cols {
    display: grid;
    grid-template-columns: 98px 477fr 695fr;
}
.cell {
    display: flex;
    align-items: center;
}
input[type="text"] {
    flex: 1;
    min-width: 0;
    height: 27px;
    padding: 0 4px;
    font-family: inherit;
    font-size: 15px;
    color: #1a1a1a;
    background-color: #fff;
    border: 1px solid #b4b4bb;
}
input[type="text"].short {
    height: 25px;
    border-color: #7f7f7f;
}
input[type="text"]:disabled {
    background-color: #e3e3e3;
    border-color: #c2c2c2;
}
.side-btn {
    width: 27px;
    height: 25px;
    margin-left: 2px;
    display: flex;
    align-items: center;
    justify-content: center;
    background-color: #e1e1e1;
    border: 1px solid #adadad;
}
.side-btn.dark {
    margin-right: 2px;
    border-color: #6f6f6f;
}
.prefix {
    width: 72px;
    margin-left: 13px;
    white-space: nowrap;
}
.check {
    display: flex;
    align-items: center;
    gap: 5px;
}
.row > .check {
    margin-left: -2px;
}
.check.ref {
    margin: 0 16px 0 15px;
}
.hint {
    margin: 0 9px 0 auto;
}
input[type="checkbox"] {
    appearance: none;
    width: 16px;
    height: 16px;
    margin: 0;
    background-color: #fff;
    border: 1px solid #333;
}
input[type="checkbox"]:checked::before {
    content: "";
    display: block;
    width: 5px;
    height: 10px;
    margin: 0 0 0 5px;
    border: solid #444;
    border-width: 0 2px 2px 0;
    transform: rotate(42deg);
}

/* data grids */
.grid {
    position: relative;
    margin: 2px 2px 4px 3px;
    padding: 2px;
    border: 1px solid #111;
}
.info-grid {
    display: flex;
    height: 161px;
    padding-bottom: 0;
}
.info-grid table {
    flex: 1;
    height: 100%;
}
.comp-grid {
    flex: 1;
    padding-right: 0;
    background-color: #ababab;
    border-color: #555;
}
table {
    width: 100%;
    table-layout: fixed;
    border-collapse: separate;
    border-spacing: 0;
    font-size: 13px;
    background-color: #fff;
}
.w-head { width: 49px; }
.w-id { width: 156px; }
.w-val { width: 46px; }
.w-ico { width: 26px; }
.w-desc { width: 156px; }
.w-cond { width: 125px; }
.w-mat { width: 188px; }
.w-rot { width: 82px; }
.w-edit { width: 74px; }
th {
    height: 24px;
    padding: 0 9px;
    font-weight: normal;
    text-align: left;
    white-space: nowrap;
    border-right: 1px solid #e2e2e2;
    border-bottom: 1px solid #e8e8e8;
}
td {
    height: 27px;
    padding: 0 4px;
    white-space: nowrap;
    border-right: 1px solid #a0a0a0;
    border-bottom: 1px solid #a0a0a0;
}
tbody tr:nth-child(even) td {
    height: 28px;
}
.info-grid tbody tr:last-child td {
    height: 23px;
    border-bottom: none;
}
.rh {
    padding-left: 7px;
    border-color: #e2e2e2;
}
.cur {
    width: 6px;
    height: 12px;
}
.star {
    width: 8px;
    height: 8px;
    margin-left: 2px;
}
.sel {
    color: #fff;
    background-color: #0078d7;
}
.mid {
    text-align: center;
}
.ico {
    padding: 0;
    text-align: center;
}
.ico button {
    display: block;
    margin: 0 auto;
}
.ico svg {
    width: 20px;
    height: 18px;
}
.ico input {
    display: block;
    margin: 0 auto;
}
.sum {
    font-family: "Liberation Serif", serif;
    font-size: 15px;
    color: #555;
}
.mdf {
    background:
        repeating-linear-gradient(35deg, transparent 0 3px, #c39970 3px 4px),
        repeating-linear-gradient(125deg, #cda57e 0 4px, #c79d76 4px 5px);
}
.rot {
    font-style: italic;
    color: #888;
}
.scroll {
    width: 20px;
    display: flex;
    flex-direction: column;
    background-color: #f0f0f0;
}
.scroll button {
    height: 21px;
    display: flex;
    align-items: center;
    justify-content: center;
}
.scroll button:last-child {
    height: 24px;
}
.scroll svg {
    width: 10px;
    height: 8px;
}
.thumb {
    flex: 1;
    margin: 0 1px;
    background-color: #cdcdcd;
}
```
